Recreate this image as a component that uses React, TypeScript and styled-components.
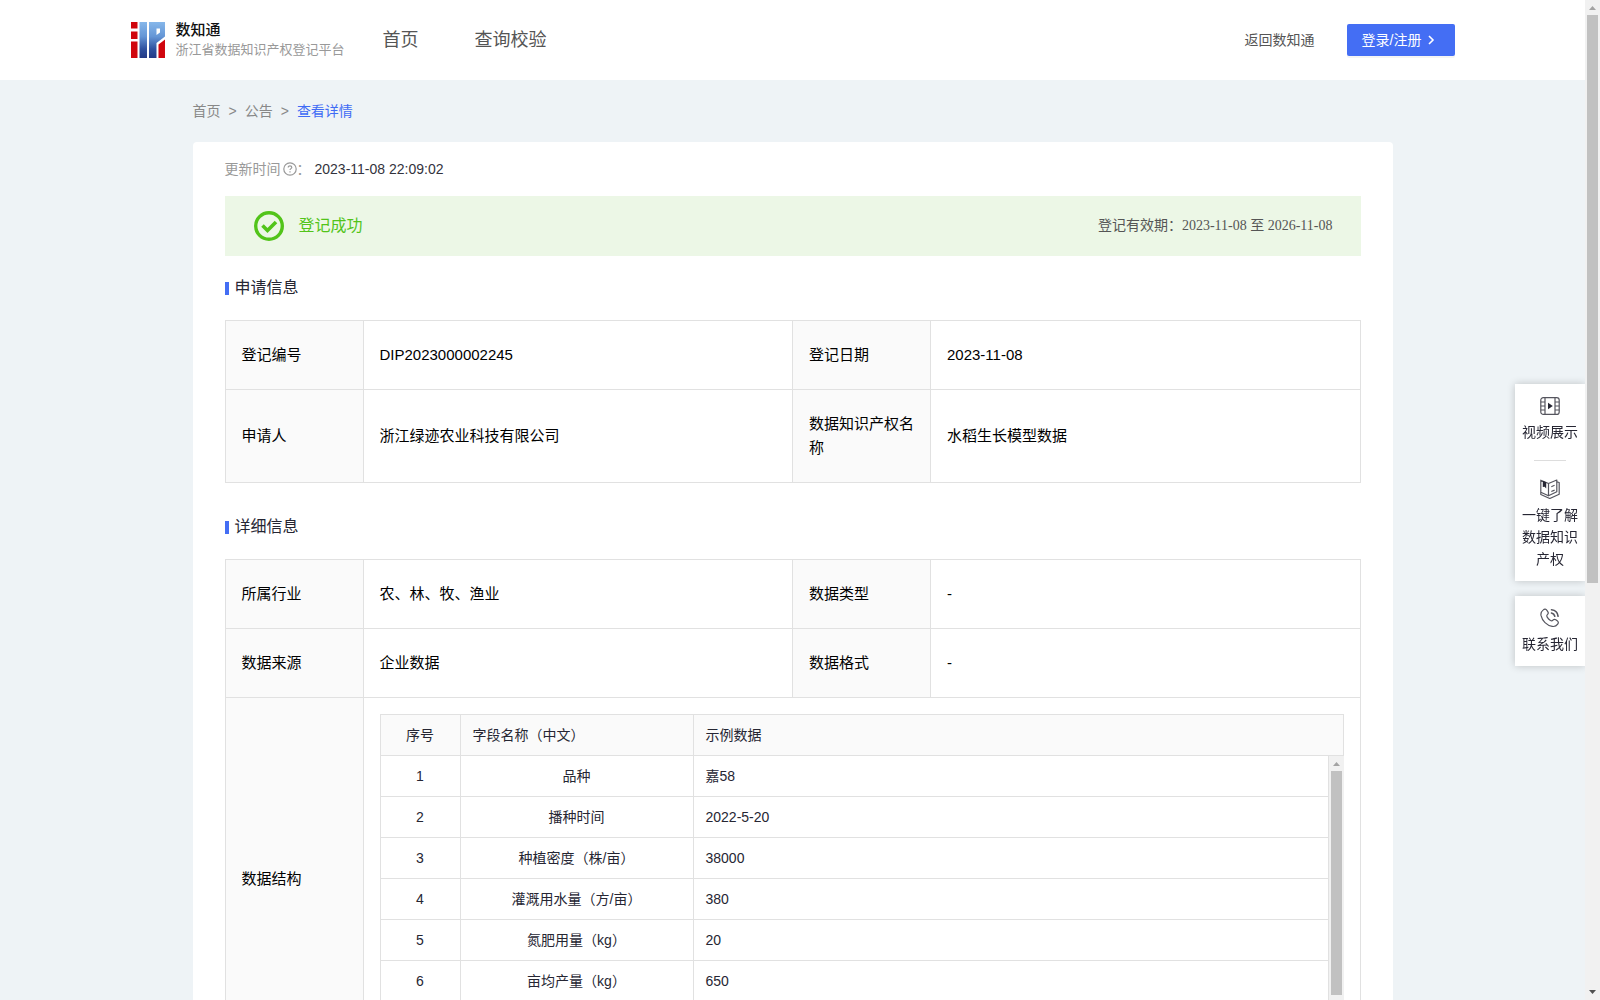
import React from "react";
import styled, { createGlobalStyle } from "styled-components";

const GlobalStyle = createGlobalStyle`
  *, *::before, *::after { box-sizing: border-box; }
  body {
    margin: 0;
    font-family: "Liberation Sans", "Noto Sans CJK SC", sans-serif;
    font-size: 14px;
    line-height: 22px;
    color: #262633;
    background: #eef3f6;
  }
  a { color: inherit; text-decoration: none; }
`;

const Shell = styled.div`
  display: flex;
  height: 100vh;
  overflow: hidden;
`;

const Page = styled.div`
  flex: 1;
  min-width: 0;
  overflow: hidden;
  background: #eef3f6;
`;

const Header = styled.header`
  background: #fff;
`;

const HeaderInner = styled.div`
  display: flex;
  align-items: center;
  max-width: 1324px;
  height: 80px;
  margin: 0 auto;
`;

const Brand = styled.a`
  display: flex;
  align-items: center;
  gap: 10px;
  width: 214px;
  white-space: nowrap;
`;

const BrandText = styled.span`
  display: flex;
  flex-direction: column;
`;

const BrandName = styled.strong`
  font-size: 15px;
  font-weight: 500;
  line-height: 20px;
  color: #111;
`;

const BrandSub = styled.span`
  font-size: 13px;
  line-height: 20px;
  color: #999;
`;

const Nav = styled.nav`
  display: flex;
  flex: 1;
  gap: 56px;
  margin-left: 38px;
  font-size: 18px;
  color: #555;
`;

const BackLink = styled.a`
  color: #555;
`;

const LoginButton = styled.button`
  display: flex;
  align-items: center;
  gap: 4px;
  width: 108px;
  height: 32px;
  margin-left: 32px;
  padding: 0 15px;
  border: 0;
  border-radius: 2px;
  background: #446ef4;
  box-shadow: 0 2px 0 rgba(0, 0, 0, 0.045);
  color: #fff;
  font: inherit;
  white-space: nowrap;
  cursor: pointer;
`;

const Main = styled.main`
  max-width: 1200px;
  margin: 0 auto;
`;

const Breadcrumb = styled.nav`
  display: flex;
  gap: 8px;
  padding: 20px 0;
  color: #888;
`;

const Current = styled.span`
  color: #3f6bf5;
`;

const Card = styled.article`
  padding: 16px 32px 32px;
  border-radius: 4px;
  background: #fff;
`;

const Updated = styled.div`
  display: flex;
  align-items: center;
  color: #999;

  svg { margin-left: 2px; }
  time { margin-left: 4px; color: #33333d; }
`;

const Banner = styled.div`
  display: flex;
  align-items: center;
  gap: 14px;
  height: 60px;
  margin-top: 16px;
  padding: 0 28px;
  background: #ecf7e6;
`;

const Status = styled.span`
  flex: 1;
  font-size: 16px;
  color: #52c41a;
`;

const Validity = styled.span`
  font-family: "Liberation Serif", "Noto Sans CJK SC", serif;
  color: #555;
`;

const SectionTitle = styled.h2<{ $top: number }>`
  display: flex;
  align-items: center;
  gap: 6px;
  margin: ${(p) => p.$top}px 0 20px;
  font-size: 16px;
  font-weight: 400;
  line-height: 24px;

  &::before {
    content: "";
    width: 4px;
    height: 13px;
    background: #446ef4;
  }
`;

const InfoTable = styled.table`
  width: 100%;
  table-layout: fixed;
  border-collapse: collapse;
  font-size: 15px;
  line-height: 24px;
  color: #000;
`;

const Label = styled.th`
  padding: 22px 16px;
  border: 1px solid #e1e1e1;
  background: #fafafa;
  font-weight: 400;
  text-align: left;
`;

const Value = styled.td<{ $nested?: boolean }>`
  padding: ${(p) => (p.$nested ? "16px" : "22px 16px")};
  border: 1px solid #e1e1e1;
`;

const LabelCol = styled.col`
  width: 138px;
`;

const FieldTable = styled.table`
  width: 100%;
  table-layout: fixed;
  border-collapse: separate;
  border-spacing: 0;
  font-size: 14px;
  line-height: 22px;
  color: #262633;
`;

const FieldFrame = styled.div`
  border-top: 1px solid #e1e1e1;
  border-left: 1px solid #e1e1e1;
`;

const IndexCol = styled.col`
  width: 80px;
`;

const NameCol = styled.col`
  width: 233px;
`;

const FieldTh = styled.th<{ $center?: boolean }>`
  height: 41px;
  padding: 0 12px;
  border: 0 solid #e1e1e1;
  border-width: 0 1px 1px 0;
  background: #fafafa;
  font-weight: 400;
  text-align: ${(p) => (p.$center ? "center" : "left")};
`;

const FieldTd = styled.td<{ $center?: boolean }>`
  height: 41px;
  padding: 0 12px;
  border: 0 solid #e1e1e1;
  border-width: 0 1px 1px 0;
  text-align: ${(p) => (p.$center ? "center" : "left")};
`;

const FieldScroll = styled.div`
  display: flex;
  align-items: stretch;
  min-height: 287px;
`;

const FieldPane = styled.div`
  flex: 1;
  min-width: 0;
`;

const Track = styled.div`
  display: flex;
  flex: none;
  flex-direction: column;
  width: 15px;
  background: #f1f1f1;
`;

const TrackBody = styled.div`
  flex: 1;
  padding: 0 2px;
`;

const Thumb = styled.div<{ $size: number }>`
  height: ${(p) => p.$size}%;
  background: #c1c1c1;
`;

const Side = styled.aside`
  position: fixed;
  top: 384px;
  right: 15px;
  display: flex;
  flex-direction: column;
  gap: 15px;
  width: 70px;
  clip-path: inset(-10px 0 -10px -10px);
`;

const SidePanel = styled.div`
  padding: 0 7px;
  background: #fff;
  box-shadow: 0 0 8px rgba(0, 0, 0, 0.2);
`;

const SideItem = styled.a`
  display: flex;
  flex-direction: column;
  align-items: center;
  gap: 5px;
  padding: 12px 0 11px;
  text-align: center;
`;

const SideRule = styled.hr`
  width: 32px;
  height: 1px;
  margin: 6px auto;
  border: 0;
  background: #ddd;
`;

function Logo() {
  return (
    <svg width="35" height="36" viewBox="0 0 35 36" aria-hidden="true">
      <defs>
        <linearGradient id="brandBlue" x1="0" y1="0" x2="0" y2="36" gradientUnits="userSpaceOnUse">
          <stop offset="0" stopColor="#86b7ea" />
          <stop offset="0.4" stopColor="#6596d6" />
          <stop offset="0.75" stopColor="#2f519f" />
          <stop offset="1" stopColor="#243a86" />
        </linearGradient>
      </defs>
      <path fill="#d0060e" d="M0 0h6.500v6.500H0zM0 9.500h6.500V17H0zM0 19.500h6.500V36H0z" />
      <path fill="url(#brandBlue)" d="M8.500 0h7.500v36H8.500z" />
      <path fill="url(#brandBlue)" fillRule="evenodd" d="M18 0h16v14.500l-8.500 6.500V36H18zM25.500 6.500v6.500l3.500-2.500v-4z" />
      <path fill="#d0060e" d="M27.500 22.500L34 17.500V36h-6.500z" />
    </svg>
  );
}

function ChevronRight() {
  return (
    <svg width="10" height="12" viewBox="0 0 10 12" fill="none" stroke="#fff" strokeWidth="1.600" aria-hidden="true">
      <path d="M4 2l4 4-4 4" />
    </svg>
  );
}

function HelpIcon() {
  return (
    <svg width="14" height="14" viewBox="0 0 14 14" fill="none" stroke="#999" strokeWidth="1.200" aria-hidden="true">
      <circle cx="7" cy="7" r="6.200" />
      <path d="M5.200 5.600c0-1.100.8-1.800 1.800-1.800s1.800.7 1.800 1.600c0 1.200-1.800 1.300-1.800 2.600" />
      <path d="M7 9.200v1.200" />
    </svg>
  );
}

function SuccessIcon() {
  return (
    <svg width="32" height="32" viewBox="0 0 32 32" fill="none" stroke="#52c41a" aria-hidden="true">
      <circle cx="16" cy="16" r="13.300" strokeWidth="3.400" />
      <path d="M9.500 15.500l5 5 8.500-8.500" strokeWidth="3.600" />
    </svg>
  );
}

function VideoIcon() {
  return (
    <svg width="20" height="20" viewBox="0 0 20 20" fill="none" stroke="#55555e" strokeWidth="1.200" aria-hidden="true">
      <rect x="0.800" y="1.600" width="18.400" height="16.800" rx="2.500" />
      <path d="M5 1.600v16.800M15 1.600v16.800M.8 6H5M.8 10H5M.8 14H5M15 6h4.200M15 10h4.200M15 14h4.200" />
      <path d="M8 6.800v6.400l4.800-3.200z" fill="#262633" stroke="none" />
    </svg>
  );
}

function BookIcon() {
  return (
    <svg width="20" height="20" viewBox="0 0 20 20" fill="none" stroke="#55555e" strokeWidth="1.200" strokeLinejoin="round" aria-hidden="true">
      <path d="M.8 1.200L8.500 4.500v12.300L.8 13.200zM8.500 4.500L16.800 1v11.800l-8.300 4" />
      <path d="M.8 13.200v2.300l9 4 9.400-4.300V3.500l-2.400-.6" />
      <path d="M11.300 7.700l3.300-1.400M11.300 12.500l3.300-1.400" />
      <path d="M2.800 1.800l3.400 1.500v6.200L4.600 7.700 2.800 8z" fill="#262633" stroke="none" />
    </svg>
  );
}

function PhoneIcon() {
  return (
    <svg width="20" height="20" viewBox="0 0 20 20" fill="none" stroke="#55555e" strokeWidth="1.200" strokeLinecap="round" strokeLinejoin="round" aria-hidden="true">
      <path d="M3.300 1.900c1.300-1.200 2.700-.9 3.600.4l1 1.500c.7 1.100.4 2-.5 2.800-.8.700-.8 1.400-.2 2.500.8 1.400 1.900 2.500 3.300 3.400 1 .6 1.700.5 2.400-.3.900-1 1.900-1.100 2.900-.4l1.400 1c1.300.9 1.500 2.100.5 3.400-1.300 1.800-3.200 2.600-5.500 2.200C6.800 17.500 2.200 13 1 7.400.6 5.100 1.500 3.300 3.300 1.900z" />
      <path d="M11.500 5c1.700.4 2.900 1.600 3.300 3.300M11.500 1.800c3.700.4 6.200 2.900 6.600 6.500" strokeWidth="1.600" />
    </svg>
  );
}

function Arrow({ down, strong }: { down?: boolean; strong?: boolean }) {
  return (
    <svg width="15" height="15" viewBox="0 0 15 15" fill={strong ? "#505050" : "#a3a3a3"} aria-hidden="true">
      <path d={down ? "M4 5h7L7.500 9z" : "M4 10h7L7.500 6z"} />
    </svg>
  );
}

function ScrollTrack({ size }: { size: number }) {
  return (
    <Track aria-hidden="true">
      <Arrow />
      <TrackBody>
        <Thumb $size={size} />
      </TrackBody>
      <Arrow down strong />
    </Track>
  );
}

const fields = [
  ["品种", "嘉58"],
  ["播种时间", "2022-5-20"],
  ["种植密度（株/亩）", "38000"],
  ["灌溉用水量（方/亩）", "380"],
  ["氮肥用量（kg）", "20"],
  ["亩均产量（kg）", "650"],
];

function InfoCols() {
  return (
    <colgroup>
      <LabelCol />
      <col />
      <LabelCol />
      <col />
    </colgroup>
  );
}

function FieldCols() {
  return (
    <colgroup>
      <IndexCol />
      <NameCol />
      <col />
    </colgroup>
  );
}

function InfoRow({ items }: { items: [string, string][] }) {
  return (
    <tr>
      {items.map(([label, value]) => (
        <React.Fragment key={label}>
          <Label scope="row">{label}</Label>
          <Value>{value}</Value>
        </React.Fragment>
      ))}
    </tr>
  );
}

function FieldList() {
  return (
    <FieldFrame>
      <FieldTable>
        <FieldCols />
        <thead>
          <tr>
            <FieldTh $center>序号</FieldTh>
            <FieldTh>字段名称（中文）</FieldTh>
            <FieldTh>示例数据</FieldTh>
          </tr>
        </thead>
      </FieldTable>
      <FieldScroll>
        <FieldPane>
          <FieldTable>
            <FieldCols />
            <tbody>
              {fields.map(([name, sample], i) => (
                <tr key={name}>
                  <FieldTd $center>{i + 1}</FieldTd>
                  <FieldTd $center>{name}</FieldTd>
                  <FieldTd>{sample}</FieldTd>
                </tr>
              ))}
            </tbody>
          </FieldTable>
        </FieldPane>
        <ScrollTrack size={87} />
      </FieldScroll>
    </FieldFrame>
  );
}

export default function App() {
  return (
    <Shell>
      <GlobalStyle />
      <Page>
        <Header>
          <HeaderInner>
            <Brand href="#">
              <Logo />
              <BrandText>
                <BrandName>数知通</BrandName>
                <BrandSub>浙江省数据知识产权登记平台</BrandSub>
              </BrandText>
            </Brand>
            <Nav>
              <a href="#home">首页</a>
              <a href="#verify">查询校验</a>
            </Nav>
            <BackLink href="#portal">返回数知通</BackLink>
            <LoginButton type="button">
              登录/注册
              <ChevronRight />
            </LoginButton>
          </HeaderInner>
        </Header>
        <Main>
          <Breadcrumb>
            <a href="#home">首页</a>
            <span>&gt;</span>
            <a href="#notice">公告</a>
            <span>&gt;</span>
            <Current>查看详情</Current>
          </Breadcrumb>
          <Card>
            <Updated>
              <span>更新时间</span>
              <HelpIcon />
              <span>：</span>
              <time>2023-11-08 22:09:02</time>
            </Updated>
            <Banner>
              <SuccessIcon />
              <Status>登记成功</Status>
              <Validity>登记有效期：2023-11-08 至 2026-11-08</Validity>
            </Banner>
            <SectionTitle $top={20}>申请信息</SectionTitle>
            <InfoTable>
              <InfoCols />
              <tbody>
                <InfoRow items={[["登记编号", "DIP2023000002245"], ["登记日期", "2023-11-08"]]} />
                <InfoRow items={[["申请人", "浙江绿迹农业科技有限公司"], ["数据知识产权名称", "水稻生长模型数据"]]} />
              </tbody>
            </InfoTable>
            <SectionTitle $top={32}>详细信息</SectionTitle>
            <InfoTable>
              <InfoCols />
              <tbody>
                <InfoRow items={[["所属行业", "农、林、牧、渔业"], ["数据类型", "-"]]} />
                <InfoRow items={[["数据来源", "企业数据"], ["数据格式", "-"]]} />
                <tr>
                  <Label scope="row">数据结构</Label>
                  <Value $nested colSpan={3}>
                    <FieldList />
                  </Value>
                </tr>
              </tbody>
            </InfoTable>
          </Card>
        </Main>
      </Page>
      <ScrollTrack size={58.6} />
      <Side>
        <SidePanel>
          <SideItem href="#video">
            <VideoIcon />
            视频展示
          </SideItem>
          <SideRule />
          <SideItem href="#guide">
            <BookIcon />
            一键了解数据知识产权
          </SideItem>
        </SidePanel>
        <SidePanel>
          <SideItem href="#contact">
            <PhoneIcon />
            联系我们
          </SideItem>
        </SidePanel>
      </Side>
    </Shell>
  );
}
